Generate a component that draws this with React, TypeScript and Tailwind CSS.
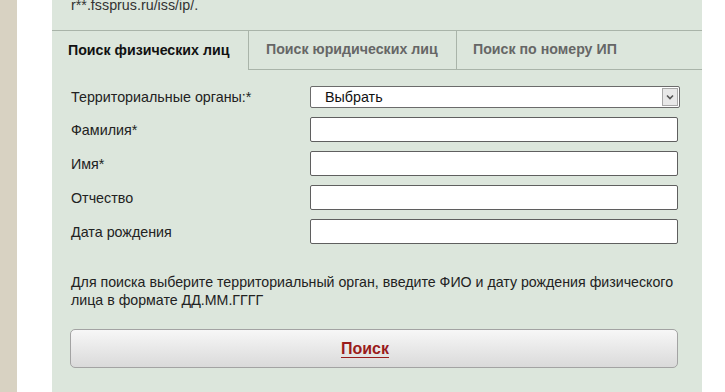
import React from "react";

const font = { fontFamily: '"Liberation Sans", Arial, sans-serif' };

function Field({ label, select }: { label: string; select?: boolean }) {
  return (
    <div className="flex shrink-0 items-center">
      <div className="w-[239px] shrink-0 text-[14.3px] text-[#222] leading-[16px]">{label}</div>
      {select ? (
        <div className="flex h-[22px] w-[370px] items-center justify-between rounded-[2px] border border-[#6b6b6b] bg-white">
          <span className="pl-[14px] text-[14.3px] leading-[16px] text-[#111]">Выбрать</span>
          <span className="mr-[1px] flex h-[18px] w-[16px] items-center justify-center border border-[#a8a8a8] bg-[#e8e8e8]">
            <svg width="8" height="6" viewBox="0 0 8 6">
              <path d="M1 1.5 L4 4.5 L7 1.5" fill="none" stroke="#555" strokeWidth="1.6" />
            </svg>
          </span>
        </div>
      ) : (
        <div className="h-[25px] w-[368px] rounded-[2px] border border-[#5f5f5f] bg-white" />
      )}
    </div>
  );
}

export default function App() {
  return (
    <div className="flex h-[392px] w-[725px] overflow-hidden bg-white" style={font}>
      <div className="w-[17px] shrink-0 bg-[#d8d2c2]" />
      <div className="w-[35px] shrink-0 bg-white" />
      <div className="flex w-[650px] shrink-0 flex-col bg-[#dce6dc]">
        <div className="h-[30px] shrink-0 pl-[19px]">
          <div className="-mt-[3px] text-[14.3px] leading-[16px] text-[#333]">r**.fssprus.ru/iss/ip/.</div>
        </div>
        <div className="flex h-[40px] shrink-0 border-t border-[#a9b4a9] text-[14.2px] font-bold">
          <div className="flex w-[196px] items-center pl-[16px] text-[#111]">Поиск физических лиц</div>
          <div className="flex w-[209px] items-center border-b border-l border-r border-[#a9b4a9] pl-[17px] text-[#666]">
            Поиск юридических лиц
          </div>
          <div className="flex flex-1 items-center border-b border-[#a9b4a9] pl-[16px] text-[#666]">
            Поиск по номеру ИП
          </div>
        </div>
        <div className="flex shrink-0 flex-col gap-[9px] pl-[19px] pt-[16px]">
          <Field label="Территориальные органы:*" select />
          <Field label="Фамилия*" />
          <Field label="Имя*" />
          <Field label="Отчество" />
          <Field label="Дата рождения" />
        </div>
        <div className="mt-[29px] shrink-0 pl-[19px] pr-[20px] text-[14.2px] leading-[18px] text-[#222]">
          Для поиска выберите территориальный орган, введите ФИО и дату рождения физического лица в формате ДД.ММ.ГГГГ
        </div>
        <div className="ml-[18px] mt-[20px] flex h-[39px] w-[608px] shrink-0 items-center justify-center rounded-[5px] border border-[#a3a3a3] bg-gradient-to-b from-[#f7f7f7] to-[#dadada] pr-[18px]">
          <span className="text-[16px] font-bold leading-[18px] text-[#9a1b1b] underline underline-offset-[3px]">Поиск</span>
        </div>
        <div className="mt-[23px] shrink-0 pl-[24px] text-[14.2px] leading-[16px] text-[#222]">Информация об исполнительных производствах</div>
      </div>
      <div className="flex-1 bg-white" />
    </div>
  );
}
